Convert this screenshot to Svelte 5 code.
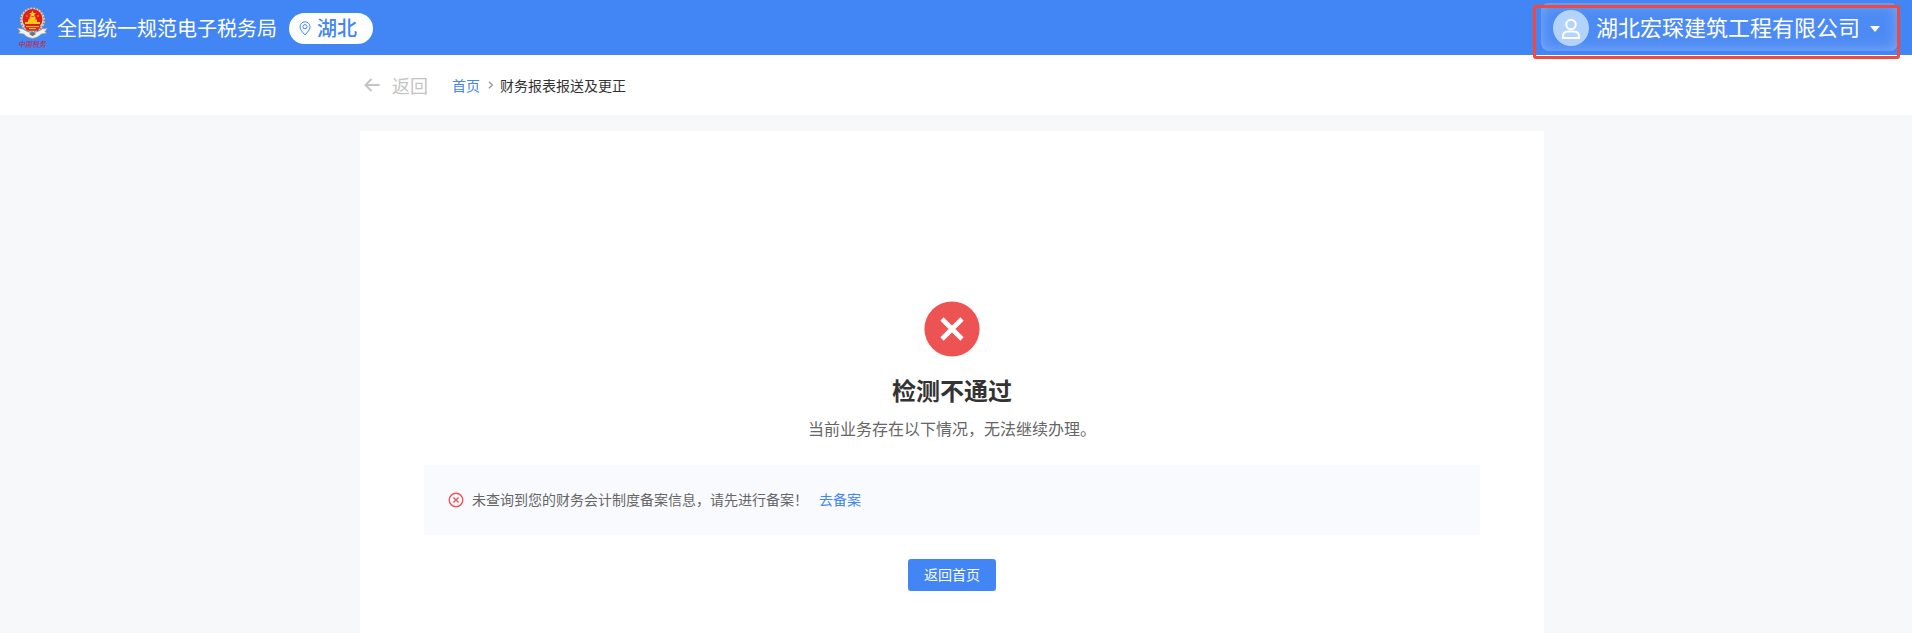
<script>
const region = '湖北'
const company = '湖北宏琛建筑工程有限公司'

let problems = [
  { text: '未查询到您的财务会计制度备案信息，请先进行备案！', action: '去备案' },
]
</script>

<div class="page">
  <header>
    <div class="brand">
      <svg class="emblem" width="34" height="44" viewBox="0 0 34 44">
        <circle cx="16.5" cy="14" r="11" fill="none" stroke="#d5d5ce" stroke-width="3" />
        <circle cx="16.5" cy="14" r="12" fill="none" stroke="#7d868d" stroke-width="2.2" stroke-dasharray="1.4 1.7" />
        <circle cx="16.5" cy="13" r="10" fill="#e51b16" />
        <path d="M16.5 4.6l1.1 2.4 2.6.2-2 1.6.7 2.5-2.4-1.4-2.4 1.4.7-2.5-2-1.6 2.6-.2z" fill="#ffd51e" />
        <path d="M9 16h3v-2.5h1.5V11h6v2.5H21V16h3v2H9z" fill="#ffc91c" />
        <circle cx="11" cy="10" r=".8" fill="#ffd51e" />
        <circle cx="22" cy="10" r=".8" fill="#ffd51e" />
        <path d="M8 20h17l-3 4.7H11z" fill="#d52a22" />
        <path d="M10 20.6h13M13 22.6h7" stroke="#f8c638" stroke-width="1" />
        <path d="M1.5 22.2l5.5.7q9.5 7.6 19 0l5.5-.7-2.6 3.5 2 1.6-5.5.8q-8.9 8.6-17.8 0l-5.5-.8 2-1.6z" fill="#f1f2ef" stroke="#8b939b" stroke-width=".7" />
        <path d="M13 28l3.5-2.6L20 28l-3.5 2.2z" fill="#6d767d" />
        <text x="2" y="41" class="motto" textLength="28" lengthAdjust="spacingAndGlyphs">中国税务</text>
      </svg>
      <span class="name">全国统一规范电子税务局</span>
      <span class="region">
        <svg width="12" height="15" viewBox="0 0 12 15" fill="none" stroke="#4285f4">
          <path d="M6 13.9C3.6 11.3 1 8.5 1 5.8a5 5 0 0 1 10 0c0 2.7-2.6 5.5-5 8.1z" />
          <circle cx="6" cy="5.7" r="2.1" />
        </svg>
        {region}
      </span>
    </div>
    <div class="account">
      <svg class="avatar" width="36" height="36" viewBox="0 0 36 36">
        <circle cx="18" cy="18" r="18" fill="#b3d3fb" />
        <g fill="none" stroke="#fff" stroke-width="2">
          <circle cx="18" cy="14.5" r="4.7" />
          <path d="M10 28v-1.5c0-3 2-5 5-5h6c3 0 5 2 5 5V28z" />
        </g>
      </svg>
      <span class="company">{company}</span>
      <span class="caret"></span>
      <div class="mark"></div>
    </div>
  </header>

  <nav>
    <svg width="16" height="14" viewBox="0 0 16 14" fill="none" stroke="#c4c4c4" stroke-width="2">
      <path d="M7.5 1L1.5 7l6 6M1.5 7H15.5" />
    </svg>
    <span class="back">返回</span>
    <a href="#home">首页</a>
    <svg class="sep" width="6" height="8" viewBox="0 0 6 8" fill="none" stroke="#999" stroke-width="1.4">
      <path d="M1 .8L4.3 4 1 7.2" />
    </svg>
    <span class="current">财务报表报送及更正</span>
  </nav>

  <main>
    <svg class="fail" width="56" height="56" viewBox="0 0 56 56">
      <circle cx="28" cy="28" r="27.6" fill="#ed5353" />
      <path d="M18 18l20 20M38 18L18 38" stroke="#fff" stroke-width="4.6" />
    </svg>
    <h1>检测不通过</h1>
    <p class="summary">当前业务存在以下情况，无法继续办理。</p>
    <div class="problems">
      {#each problems as item}
        <div class="problem">
          <svg width="16" height="16" viewBox="0 0 16 16" fill="none" stroke="#ed5353" stroke-width="1.4">
            <circle cx="8" cy="8" r="6.8" />
            <path d="M5.4 5.4l5.2 5.2M10.6 5.4l-5.2 5.2" />
          </svg>
          <span>{item.text}</span>
          <a href="#record">{item.action}</a>
        </div>
      {/each}
    </div>
    <button>返回首页</button>
  </main>
</div>

<style>
:global(body) {
  margin: 0;
}
* {
  box-sizing: border-box;
}
.page {
  height: 633px;
  overflow: hidden;
  background: #f6f8fa;
  font-family: 'Noto Sans CJK SC', sans-serif;
  font-size: 14px;
  color: #333;
}
svg {
  display: block;
  flex: none;
}
a {
  color: #4285f4;
  text-decoration: none;
}
header {
  height: 55px;
  padding: 0 14px 0 16px;
  display: flex;
  justify-content: space-between;
  background: #4285f4;
  color: #fff;
}
.brand {
  display: flex;
  align-items: center;
}
.emblem {
  margin-top: 1px;
}
.motto {
  font-family: 'Noto Sans CJK SC', sans-serif;
  font-size: 7.5px;
  font-style: italic;
  fill: #c0263c;
}
.name {
  margin-left: 7px;
  font-size: 20px;
  line-height: 30px;
}
.region {
  display: flex;
  align-items: center;
  gap: 6px;
  width: 84px;
  height: 31px;
  margin: 1px 0 0 12px;
  padding-left: 10px;
  border-radius: 16px;
  background: #fff;
  color: #4285f4;
  font-size: 20px;
  font-weight: 500;
  line-height: 30px;
}
.account {
  position: relative;
  display: flex;
  align-items: center;
  width: 357px;
  height: 48px;
  margin-top: 3px;
  padding: 2px 0 0 12px;
  border-radius: 8px;
  background: #4d8bf4;
  box-shadow: inset 0 0 14px rgba(255, 255, 255, 0.3);
}
.company {
  margin: -4px 0 0 7px;
  font-size: 22px;
  line-height: 32px;
}
.caret {
  margin: 2px 0 0 10px;
  border: 5.5px solid transparent;
  border-top: 6px solid #fff;
  border-bottom: 0;
}
/* red frame drawn over the account box */
.mark {
  position: absolute;
  top: 2px;
  left: -8px;
  width: 367px;
  height: 54px;
  border: 3px solid #f04a3e;
  border-radius: 3px;
}
nav {
  display: flex;
  align-items: center;
  height: 60px;
  padding-left: 364px;
  background: #fff;
}
nav > svg:first-child {
  margin-top: -1px;
}
.back {
  margin: 0 24px 0 12px;
  color: #c4c4c4;
  font-size: 18px;
}
.sep {
  margin: 0 6px 0 8px;
}
main {
  display: flex;
  flex-direction: column;
  align-items: center;
  width: 1184px;
  height: 520px;
  margin: 16px 0 0 360px;
  padding-top: 170px;
  background: #fff;
}
h1 {
  margin: 15px 0 0;
  font-size: 24px;
  line-height: 36px;
}
.summary {
  margin: 8px 0 0;
  color: #666;
  font-size: 16px;
  line-height: 24px;
}
.problems {
  width: 1056px;
  margin-top: 25px;
  padding: 24px;
  background: #f9fafe;
}
.problem {
  display: flex;
  align-items: center;
  height: 22px;
  color: #666;
}
.problem span {
  margin: -2px 11px 0 8px;
}
.problem a {
  margin-top: -2px;
}
button {
  width: 88px;
  height: 32px;
  margin-top: 24px;
  padding: 0 0 2px;
  border: 0;
  border-radius: 3px;
  background: #4285f4;
  color: #fff;
  font: inherit;
}
</style>
